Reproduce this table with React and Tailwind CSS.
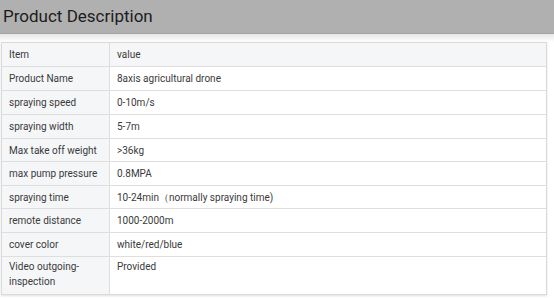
import React from "react";

const rows = [
  ["Item", "value"],
  ["Product Name", "8axis agricultural drone"],
  ["spraying speed", "0-10m/s"],
  ["spraying width", "5-7m"],
  ["Max take off weight", ">36kg"],
  ["max pump pressure", "0.8MPA"],
  ["spraying time", "10-24min（normally spraying time)"],
  ["remote distance", "1000-2000m"],
  ["cover color", "white/red/blue"],
];

const App = () => {
  return (
    <div className="w-[554px] h-[298px] bg-white overflow-hidden font-['Roboto',sans-serif]">
      <div className="h-[34px] bg-[#b0b0b0] border-b border-[#a4a4a4] pl-[3px] text-[17px] leading-[33px] text-[#1c1c1c]">
        Product Description
      </div>
      <div className="h-[8px] bg-gradient-to-b from-[#e6e6e6] to-white" />
      <div className="ml-[1px] w-[546px] border border-[#dadada] shadow-[0_1px_2px_rgba(0,0,0,0.12)] text-[10px] text-[#3a3a3a]">
        {rows.map(([k, v], i) => (
          <div
            key={k}
            className={`flex border-b border-[#dedede] ${i === 4 || i === 6 ? "h-[23px]" : "h-[24px]"} ${i === 0 ? "bg-[#f5f6f8]" : ""}`}
          >
            <div className="w-[108px] shrink-0 bg-[#f5f6f8] border-r border-[#dedede] pl-[7px] flex items-center whitespace-nowrap">
              {k}
            </div>
            <div className="flex-1 px-[7px] flex items-center">{v}</div>
          </div>
        ))}
        <div className="flex h-[37px]">
          <div className="w-[108px] shrink-0 bg-[#f5f6f8] border-r border-[#dedede] px-[7px] pt-[2px] leading-[15px]">
            Video outgoing-
            <br />
            inspection
          </div>
          <div className="flex-1 px-[7px] pt-[2px] leading-[15px]">Provided</div>
        </div>
      </div>
    </div>
  );
};

export default App;
